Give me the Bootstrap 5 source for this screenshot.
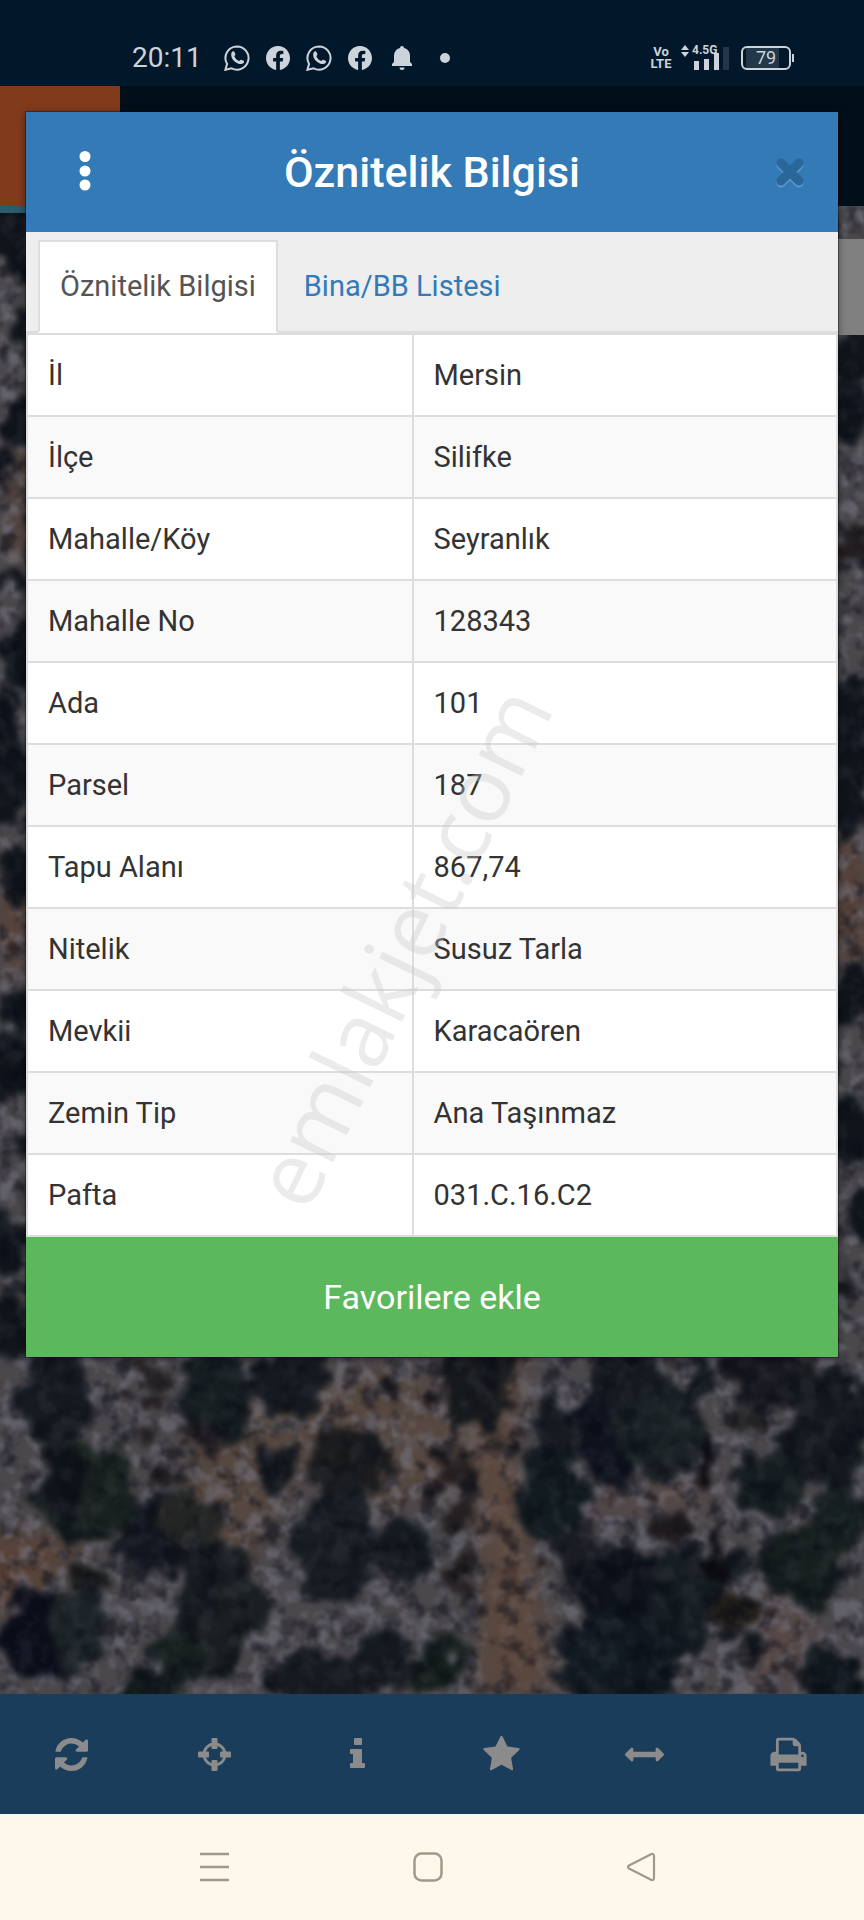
<!DOCTYPE html>
<html lang="tr">
<head>
<meta charset="utf-8">
<meta name="viewport" content="width=device-width, initial-scale=1">
<title>Öznitelik Bilgisi</title>
<link href="https://cdn.jsdelivr.net/npm/bootstrap@5.3.0/dist/css/bootstrap.min.css" rel="stylesheet">
<style>
  body { font-family: Roboto, "Liberation Sans", sans-serif; font-size: 29px; line-height: 40px; color: #333; background: #01182b; }
  svg { display: block; flex: none; }

  .status-bar { min-height: 86px; padding: 30px 70px 0 132px; background: #01182b; color: #ccd3da; font-size: 28px; line-height: 56px; }
  .notif-icons { gap: 16px; margin-left: 22px; }
  .volte { font-size: 13px; line-height: 12px; font-weight: 700; width: 24px; }
  .net-label { font-size: 12px; line-height: 12px; font-weight: 700; top: -5px; left: 15px; }
  .battery { width: 50px; height: 24px; border: 2px solid #ccd3da; border-radius: 6px; font-size: 18px; line-height: 20px; background: linear-gradient(90deg, transparent 3px, #223747 3px, #223747 36px, transparent 36px); }
  .battery-tip { width: 2px; height: 8px; background: #ccd3da; margin-left: 1px; }

  .map-header { height: 120px; background: #000f1a; }
  .map-logo { width: 120px; height: 127px; background: #803a1c; border-bottom: 7px solid #2b5c70; }
  .map-picture { top: 120px; right: 0; bottom: 0; left: 0; overflow: hidden; }
  .map-tools { top: 153px; right: 0; width: 96px; height: 96px; background: #808080; }

  .info-dialog { margin: 26px 26px 0; background: #fff; box-shadow: 0 0 0 1px rgba(0, 0, 0, .3), 0 2px 8px rgba(0, 0, 0, .5); }
  .dialog-head { min-height: 120px; background: #337ab7; color: #fff; }
  .head-btn { width: 107px; height: 120px; padding: 0 0 0 10px; border: 0; background: none; }
  .dialog-title { font-size: 43px; line-height: 48px; font-weight: 500; }
  .dialog-tabs { padding: 8px 12px 0; background: #eee; border-bottom: 2px solid #ddd; }
  .dialog-tabs .nav-link { height: 93px; padding: 24px 20px; margin-bottom: -2px; border: 2px solid transparent; border-radius: 0; color: #337ab7; }
  .dialog-tabs .nav-item + .nav-item { margin-left: 4px; }
  .dialog-tabs .nav-link.active { color: #555; background: #fff; border-color: #ddd #ddd #fff; border-radius: 2px 2px 0 0; }
  .attr-table { border-collapse: collapse; color: #333; }
  .attr-table th, .attr-table td { height: 82px; padding: 20px; border: 2px solid #ddd; font-weight: 400; }
  .attr-table th { width: 47.6%; }
  .attr-table tr:nth-child(even) { background: #f9f9f9; }
  .fav-btn { min-height: 120px; border: 0; border-radius: 0; background: #5cb85c; color: #fff; font-size: 34px; line-height: 40px; }
  .watermark { left: 46%; top: 67%; font-family: "Open Sans", sans-serif; font-size: 90px; line-height: 90px; color: rgba(200, 200, 200, .36); transform: translate(-50%, -50%) rotate(-64deg); pointer-events: none; white-space: nowrap; }

  .tool-bar { min-height: 120px; padding-right: 4px; background: #1b3d5c; }
  .tool-bar button { min-height: 120px; border: 0; padding: 0; background: none; color: #8b8b8b; }
  .system-nav { min-height: 106px; padding: 0 116px 0 107px; background: #fef8ea; }
  .system-nav button { min-height: 106px; border: 0; padding: 0; background: none; color: #a0998b; }
</style>
</head>
<body class="d-flex flex-column min-vh-100">

<svg width="0" height="0" class="position-absolute" aria-hidden="true">
  <symbol id="chat" viewBox="0 0 26 26">
    <path d="M13 1.4a11.6 11.6 0 1 1-5.4 21.9L1.4 24.800l1.700-5.900A11.600 11.600 0 0 1 13 1.400z" fill="none" stroke="currentColor" stroke-width="2"/>
    <path d="M8.300 6.700c.8-.8 1.700-.6 2.100.2l1 2.300c.2.700-.8 1.600-1.100 2 1 2.300 2.700 3.900 5 4.900.6-.5 1.300-1.700 2-1.400l2.200 1.100c.9.500.7 1.400 0 2.300-3 3.400-13.600-2.200-12.200-9.900.1-.6.500-1.100 1-1.500z" fill="currentColor"/>
  </symbol>
  <symbol id="fb" viewBox="0 0 16 16">
    <path fill="currentColor" d="M16 8.049c0-4.446-3.582-8.050-8-8.050C3.580 0 0 3.603 0 8.050c0 4.017 2.926 7.347 6.750 7.951v-5.625h-2.030V8.050H6.750V6.275c0-2.017 1.195-3.131 3.022-3.131.876 0 1.791.157 1.791.157v1.980h-1.009c-.993 0-1.303.621-1.303 1.258v1.510h2.218l-.354 2.326H9.250V16c3.824-.604 6.750-3.934 6.750-7.951"/>
  </symbol>
</svg>

<header class="status-bar d-flex align-items-center">
  <time>20:11</time>
  <div class="notif-icons d-flex align-items-center">
    <svg width="26" height="26"><use href="#chat"/></svg>
    <svg width="24" height="24"><use href="#fb"/></svg>
    <svg width="26" height="26"><use href="#chat"/></svg>
    <svg width="24" height="24"><use href="#fb"/></svg>
    <svg width="28" height="24" viewBox="0 0 28 24" fill="currentColor"><path d="M14 0a2 2 0 0 1 2 2c4 1 6 4 6 8v6l2 2v2H4v-2l2-2v-6c0-4 2-7 6-8a2 2 0 0 1 2-2zM11.500 21.500h5a2.500 2.500 0 0 1-5 0z"/></svg>
    <svg width="30" height="10" viewBox="0 0 30 10" fill="currentColor"><circle cx="13" cy="5" r="5"/></svg>
  </div>
  <div class="d-flex align-items-center ms-auto">
    <div class="volte text-center me-1"><div>Vo</div><div>LTE</div></div>
    <div class="position-relative me-2 ps-1">
      <svg width="48" height="26" viewBox="0 0 48 26" fill="currentColor">
        <path d="M0 5l4-5 4 5zM0 7h8l-4 5z"/>
        <path d="M13 16h5v9h-5zM23 14h5v11h-5zM33 8h5v17h-5z"/>
        <path d="M42 2h6v23h-6z" fill="#223747"/>
      </svg>
      <span class="net-label position-absolute mt-1">4.5G</span>
    </div>
    <div class="battery text-center ms-1">79</div>
    <div class="battery-tip"></div>
  </div>
</header>

<main class="position-relative flex-grow-1">
  <div class="map-header position-absolute top-0 start-0 end-0"></div>
  <div class="map-picture position-absolute">
    <svg width="100%" height="100%" viewBox="0 206 864 1488" preserveAspectRatio="xMidYMax slice" role="img" aria-label="Uydu haritası">
      <defs>
        <filter id="rough" x="-5%" y="-5%" width="110%" height="110%" color-interpolation-filters="sRGB">
          <feTurbulence type="fractalNoise" baseFrequency=".035" numOctaves="5" seed="8" result="n"/>
          <feDisplacementMap in="SourceGraphic" in2="n" scale="44" xChannelSelector="R" yChannelSelector="G"/>
          <feGaussianBlur stdDeviation="3"/>
        </filter>
        <filter id="soft" x="-20%" y="-20%" width="140%" height="140%" color-interpolation-filters="sRGB"><feGaussianBlur stdDeviation="12"/></filter>
        <filter id="light" x="0" y="0" width="100%" height="100%" color-interpolation-filters="sRGB">
          <feTurbulence type="fractalNoise" baseFrequency=".06" numOctaves="3" seed="3"/>
          <feColorMatrix values="0 0 0 0 .48  0 0 0 0 .48  0 0 0 0 .53  4 0 0 0 -1.800"/>
          <feGaussianBlur stdDeviation="1"/>
        </filter>
        <filter id="dark" x="0" y="0" width="100%" height="100%" color-interpolation-filters="sRGB">
          <feTurbulence type="fractalNoise" baseFrequency=".05" numOctaves="4" seed="21"/>
          <feColorMatrix values="0 0 0 0 .03  0 0 0 0 .04  0 0 0 0 .08  0 4 0 0 -1.900"/>
          <feGaussianBlur stdDeviation="1"/>
        </filter>
      </defs>
      <rect y="206" width="864" height="1488" fill="#4b484c"/>
      <g filter="url(#soft)">
        <path d="M190 1420l160-50 110 10 10 110-110 20-60-40-60 110-60-60z" fill="#564841"/>
        <path d="M-20 1530l110 10-60 60-50 20zM0 860h30v110H0zM10 440h20v120H10zM835 830h30v140h-30z" fill="#594237"/>
        <path d="M590 1480h120v30H590zM750 1600h60v80h-60z" fill="#574846"/>
      </g>
      <rect y="206" width="864" height="1488" filter="url(#light)" opacity=".45"/>
      <path d="M480 1340h50l-18 90 10 70 15 90 20 104H478l6-130-15-120z" fill="#5f483b" opacity=".85" filter="url(#soft)"/>
      <g filter="url(#rough)" fill="#151a20">
        <g>
          <ellipse cx="55" cy="1398" rx="34" ry="48"/><ellipse cx="82" cy="1492" rx="48" ry="50" fill="#18211f"/>
          <ellipse cx="60" cy="1480" rx="25" ry="35" fill="#0e1418"/>
          <ellipse cx="215" cy="1395" rx="38" ry="46" fill="#161e20"/><ellipse cx="293" cy="1380" rx="40" ry="36"/>
          <ellipse cx="200" cy="1434" rx="18" ry="16" fill="#211d20"/>
          <ellipse cx="352" cy="1463" rx="42" ry="36" fill="#1b1c1e"/><ellipse cx="277" cy="1466" rx="24" ry="22"/>
          <ellipse cx="155" cy="1535" rx="40" ry="42" fill="#12161f"/><ellipse cx="190" cy="1520" rx="32" ry="30" fill="#242524"/>
          <ellipse cx="218" cy="1612" rx="44" ry="68" fill="#1a2022"/><ellipse cx="202" cy="1580" rx="25" ry="30"/>
          <ellipse cx="335" cy="1548" rx="40" ry="60" fill="#181e23"/><ellipse cx="402" cy="1552" rx="29" ry="36"/>
          <ellipse cx="36" cy="1632" rx="34" ry="48" fill="#0c0f1b"/><ellipse cx="75" cy="1630" rx="26" ry="44" fill="#1c2427"/>
          <ellipse cx="86" cy="1574" rx="20" ry="14" fill="#171918"/><ellipse cx="176" cy="1660" rx="26" ry="32" fill="#17201f"/>
          <ellipse cx="148" cy="1690" rx="30" ry="16" fill="#10191a"/><ellipse cx="312" cy="1678" rx="50" ry="26"/>
          <ellipse cx="382" cy="1668" rx="26" ry="32"/><ellipse cx="436" cy="1665" rx="22" ry="32" fill="#141e1c"/>
        </g>
        <g>
          <ellipse cx="476" cy="1384" rx="38" ry="48" fill="#171a1d"/><ellipse cx="550" cy="1425" rx="22" ry="26"/>
          <ellipse cx="552" cy="1494" rx="32" ry="48" fill="#121b1f"/><ellipse cx="615" cy="1425" rx="44" ry="62" fill="#0d121d"/>
          <ellipse cx="658" cy="1425" rx="40" ry="58" fill="#1a2225"/><ellipse cx="622" cy="1372" rx="36" ry="34"/>
          <ellipse cx="701" cy="1460" rx="8" ry="38" fill="#0c0b0f"/><ellipse cx="699" cy="1376" rx="10" ry="26"/>
          <ellipse cx="767" cy="1368" rx="42" ry="42" fill="#191a20"/><ellipse cx="750" cy="1423" rx="17" ry="13" fill="#222123"/>
          <ellipse cx="770" cy="1484" rx="36" ry="36" fill="#151d1f"/><ellipse cx="828" cy="1430" rx="44" ry="62" fill="#14191f"/>
          <ellipse cx="840" cy="1520" rx="30" ry="34" fill="#172020"/><ellipse cx="800" cy="1566" rx="42" ry="40" fill="#161e1e"/>
          <ellipse cx="717" cy="1570" rx="10" ry="55" fill="#0b0c10"/><ellipse cx="672" cy="1526" rx="26" ry="14" fill="#1d191c"/>
          <ellipse cx="740" cy="1563" rx="13" ry="16"/><ellipse cx="740" cy="1612" rx="20" ry="16" fill="#1e1b16"/>
          <ellipse cx="733" cy="1634" rx="12" ry="12"/><ellipse cx="580" cy="1556" rx="26" ry="22" fill="#1a1c23"/>
          <ellipse cx="628" cy="1590" rx="48" ry="42" fill="#0d121b"/><ellipse cx="680" cy="1600" rx="32" ry="50" fill="#161e22"/>
          <ellipse cx="606" cy="1662" rx="52" ry="46" fill="#131b22"/><ellipse cx="650" cy="1662" rx="32" ry="46" fill="#10171e"/>
          <ellipse cx="832" cy="1680" rx="32" ry="32" fill="#11181e"/><ellipse cx="753" cy="1656" rx="8" ry="14"/>
        </g>
        <g fill="#241f20">
          <circle cx="152" cy="1374" r="13"/><ellipse cx="152" cy="1397" rx="15" ry="9"/><circle cx="125" cy="1401" r="8"/><circle cx="146" cy="1437" r="11"/>
          <circle cx="169" cy="1476" r="13"/><ellipse cx="392" cy="1387" rx="10" ry="15"/><circle cx="430" cy="1402" r="8"/><circle cx="457" cy="1470" r="17"/>
          <circle cx="461" cy="1519" r="15"/><ellipse cx="509" cy="1446" rx="7" ry="13"/><circle cx="436" cy="1492" r="9"/><ellipse cx="458" cy="1568" rx="10" ry="24"/>
          <circle cx="537" cy="1560" r="8"/><circle cx="480" cy="1610" r="6"/><circle cx="443" cy="1450" r="9"/><circle cx="257" cy="1536" r="6"/>
        </g>
        <g fill="#10151c">
          <ellipse cx="8" cy="228" rx="22" ry="30"/><ellipse cx="22" cy="265" rx="12" ry="20"/><ellipse cx="20" cy="325" rx="15" ry="16"/>
          <ellipse cx="18" cy="422" rx="18" ry="26"/><ellipse cx="2" cy="465" rx="10" ry="20"/><ellipse cx="14" cy="582" rx="22" ry="7"/>
          <ellipse cx="22" cy="655" rx="18" ry="36"/><ellipse cx="2" cy="715" rx="14" ry="30"/><ellipse cx="10" cy="780" rx="24" ry="42"/>
          <ellipse cx="18" cy="870" rx="20" ry="28"/><ellipse cx="18" cy="1005" rx="18" ry="24"/><ellipse cx="12" cy="1065" rx="24" ry="36"/>
          <ellipse cx="20" cy="1150" rx="16" ry="18"/><ellipse cx="6" cy="1245" rx="18" ry="36"/><ellipse cx="10" cy="1330" rx="22" ry="36"/>
          <ellipse cx="852" cy="355" rx="26" ry="30"/><ellipse cx="848" cy="410" rx="24" ry="34"/><ellipse cx="858" cy="545" rx="20" ry="18" fill="#1f1b1d"/>
          <ellipse cx="850" cy="728" rx="26" ry="50"/><ellipse cx="846" cy="800" rx="22" ry="36"/><ellipse cx="856" cy="990" rx="26" ry="28"/>
          <ellipse cx="846" cy="1128" rx="22" ry="32"/><ellipse cx="862" cy="1215" rx="16" ry="28"/><ellipse cx="845" cy="1290" rx="12" ry="18" fill="#262428"/>
        </g>
      </g>
      <rect y="206" width="864" height="1488" filter="url(#dark)" opacity=".5"/>
      <rect y="206" width="864" height="1488" filter="url(#light)" opacity=".1"/>
    </svg>
  </div>
  <div class="map-logo position-absolute top-0 start-0"></div>
  <div class="map-tools position-absolute"></div>

  <section class="info-dialog position-relative" role="dialog" aria-labelledby="dialogTitle">
    <div class="dialog-head d-flex align-items-center justify-content-between">
      <button type="button" class="head-btn d-flex align-items-center justify-content-center" aria-label="Menü">
        <svg width="12" height="42" viewBox="0 0 12 42" fill="#fff"><circle cx="6" cy="5.500" r="5.500"/><circle cx="6" cy="20" r="5.500"/><circle cx="6" cy="34" r="5.500"/></svg>
      </button>
      <h1 class="dialog-title m-0" id="dialogTitle">Öznitelik Bilgisi</h1>
      <button type="button" class="head-btn d-flex align-items-center justify-content-center" aria-label="Kapat">
        <svg width="32" height="32" viewBox="0 0 32 32" fill="none" stroke-width="9" stroke-linecap="round"><path d="M7 9l18 18M25 9L7 27" stroke="#5b98cb"/><path d="M7 7l18 18M25 7L7 25" stroke="#29669a"/></svg>
      </button>
    </div>
    <ul class="nav nav-tabs dialog-tabs">
      <li class="nav-item"><a class="nav-link active" aria-current="page" href="#attrs">Öznitelik Bilgisi</a></li>
      <li class="nav-item"><a class="nav-link" href="#units">Bina/BB Listesi</a></li>
    </ul>
    <table class="attr-table w-100" id="attrs">
      <tbody>
        <tr><th scope="row">İl</th><td>Mersin</td></tr>
        <tr><th scope="row">İlçe</th><td>Silifke</td></tr>
        <tr><th scope="row">Mahalle/Köy</th><td>Seyranlık</td></tr>
        <tr><th scope="row">Mahalle No</th><td>128343</td></tr>
        <tr><th scope="row">Ada</th><td>101</td></tr>
        <tr><th scope="row">Parsel</th><td>187</td></tr>
        <tr><th scope="row">Tapu Alanı</th><td>867,74</td></tr>
        <tr><th scope="row">Nitelik</th><td>Susuz Tarla</td></tr>
        <tr><th scope="row">Mevkii</th><td>Karacaören</td></tr>
        <tr><th scope="row">Zemin Tip</th><td>Ana Taşınmaz</td></tr>
        <tr><th scope="row">Pafta</th><td>031.C.16.C2</td></tr>
      </tbody>
    </table>
    <button type="button" class="btn fav-btn d-block w-100">Favorilere ekle</button>
    <span class="watermark position-absolute">emlakjet.com</span>
  </section>
</main>

<nav class="tool-bar d-flex position-relative" aria-label="Harita araçları">
  <button type="button" class="col d-flex align-items-center justify-content-center" aria-label="Yenile">
    <svg width="33" height="33" viewBox="0 0 1536 1536" fill="currentColor"><path d="M1511 928q0 5-1 7-64 268-268 434.500t-478 166.500q-146 0-282.500-55t-243.500-157l-129 129q-19 19-45 19t-45-19-19-45v-448q0-26 19-45t45-19h448q26 0 45 19t19 45-19 45l-137 137q71 66 161 102t187 36q134 0 250-65t186-179q11-17 53-117 8-23 30-23h192q13 0 22.500 9.500t9.500 22.500zm25-800v448q0 26-19 45t-45 19h-448q-26 0-45-19t-19-45 19-45l138-138q-148-137-349-137-134 0-250 65t-186 179q-11 17-53 117-8 23-30 23h-199q-13 0-22.500-9.500t-9.500-22.500v-7q65-268 270-434.500t480-166.500q146 0 284 55.500t245 156.500l130-129q19-19 45-19t45 19 19 45z"/></svg>
  </button>
  <button type="button" class="col d-flex align-items-center justify-content-center" aria-label="Konum">
    <svg width="33" height="33" viewBox="0 0 33 33" fill="currentColor"><circle cx="16.500" cy="16.500" r="10.500" fill="none" stroke="currentColor" stroke-width="2.800"/><rect x="13.500" y="0" width="6" height="11" rx="1"/><rect x="13.500" y="22" width="6" height="11" rx="1"/><rect x="0" y="13.500" width="11" height="6" rx="1"/><rect x="22" y="13.500" width="11" height="6" rx="1"/></svg>
  </button>
  <button type="button" class="col d-flex align-items-center justify-content-center" aria-label="Bilgi">
    <svg width="16" height="34" viewBox="0 0 16 34" fill="currentColor"><rect x="4" y="1" width="8" height="7" rx="1"/><path d="M2 12h9a1 1 0 0 1 1 1v13h2a1 1 0 0 1 1 1v3a1 1 0 0 1-1 1H1a1 1 0 0 1-1-1v-3a1 1 0 0 1 1-1h2v-9H1a1 1 0 0 1-1-1v-3a1 1 0 0 1 1-1z"/></svg>
  </button>
  <button type="button" class="col d-flex align-items-center justify-content-center" aria-label="Favoriler">
    <svg width="39" height="39" viewBox="0 0 1792 1792" fill="currentColor"><path d="M1728 647q0 22-26 48l-363 354 86 500q1 7 1 20 0 21-10.500 35.500t-30.500 14.500q-19 0-40-12l-449-236-449 236q-22 12-40 12-21 0-31.500-14.500t-10.500-35.500q0-6 2-20l86-500-364-354q-25-27-25-48 0-37 56-46l502-73 225-455q19-41 49-41t49 41l225 455 502 73q56 9 56 46z"/></svg>
  </button>
  <button type="button" class="col d-flex align-items-center justify-content-center" aria-label="Ölçüm">
    <svg width="39" height="39" viewBox="0 0 1792 1792" fill="currentColor"><path d="M1792 896q0 26-19 45l-256 256q-19 19-45 19t-45-19-19-45v-128h-1024v128q0 26-19 45t-45 19-45-19l-256-256q-19-19-19-45t19-45l256-256q19-19 45-19t45 19 19 45v128h1024v-128q0-26 19-45t45-19 45 19l256 256q19 19 19 45z"/></svg>
  </button>
  <button type="button" class="col d-flex align-items-center justify-content-center" aria-label="Yazdır">
    <svg width="39" height="39" viewBox="0 0 1792 1792" fill="currentColor"><path d="M448 1536h896v-256h-896v256zm0-640h896v-384h-160q-40 0-68-28t-28-68v-160h-640v640zm1152 64q0-26-19-45t-45-19-45 19-19 45 19 45 45 19 45-19 19-45zm128 0v416q0 13-9.500 22.500t-22.500 9.500h-224v160q0 40-28 68t-68 28h-960q-40 0-68-28t-28-68v-160h-224q-13 0-22.500-9.500t-9.500-22.500v-416q0-79 56.500-135.500t135.500-56.500h64v-544q0-40 28-68t68-28h672q40 0 88 20t76 48l152 152q28 28 48 76t20 88v256h64q79 0 135.500 56.500t56.500 135.500z"/></svg>
  </button>
</nav>

<nav class="system-nav d-flex position-relative" aria-label="Sistem">
  <button type="button" class="col d-flex align-items-center justify-content-center" aria-label="Son uygulamalar">
    <svg width="30" height="30" viewBox="0 0 30 30" stroke="currentColor" stroke-width="2.500"><path d="M1 2h29M1 15h29M1 28h29"/></svg>
  </button>
  <button type="button" class="col d-flex align-items-center justify-content-center" aria-label="Ana ekran">
    <svg width="30" height="30" viewBox="0 0 30 30" fill="none" stroke="currentColor" stroke-width="2.500"><rect x="1.500" y="1.500" width="27" height="27" rx="7"/></svg>
  </button>
  <button type="button" class="col d-flex align-items-center justify-content-center" aria-label="Geri">
    <svg width="30" height="30" viewBox="0 0 30 30" fill="none" stroke="currentColor" stroke-width="2.200" stroke-linejoin="round"><path d="M3 13.500L25 2.200q3-1 3 2v21.600q0 3-3 2L3 16.500q-2-1.500 0-3z"/></svg>
  </button>
</nav>

<script src="https://cdn.jsdelivr.net/npm/bootstrap@5.3.0/dist/js/bootstrap.bundle.min.js"></script>
</body>
</html>
